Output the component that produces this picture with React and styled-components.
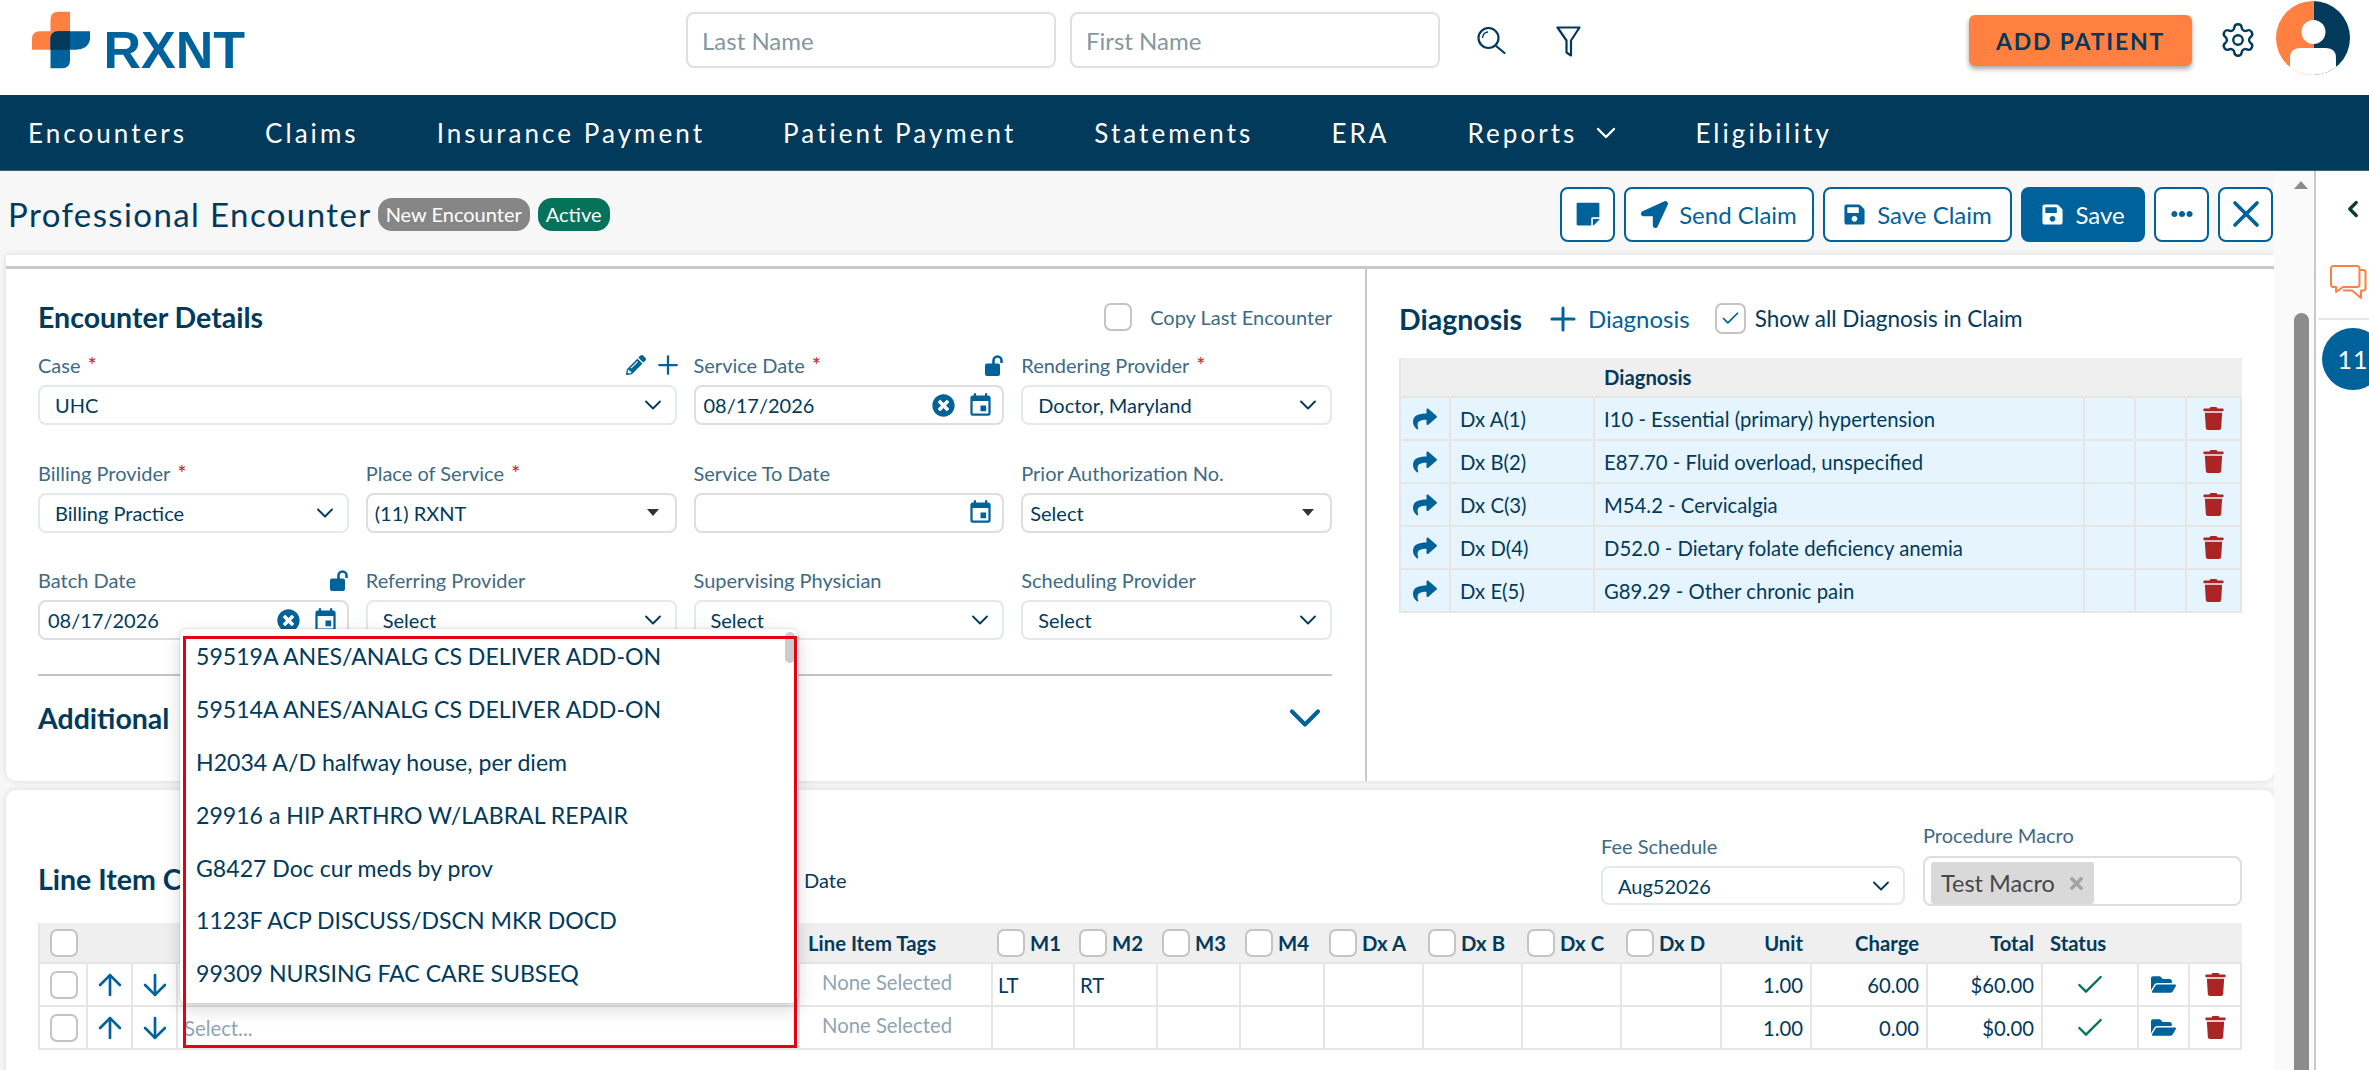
import React from 'react';
import styled, { createGlobalStyle } from 'styled-components';
import { ChevronDown, ChevronLeft, Plus, Settings, X, Check, ArrowUp, ArrowDown } from 'lucide-react';
import {
  FaEllipsisH,
  FaFolderOpen,
  FaLocationArrow,
  FaPencilAlt,
  FaSave,
  FaShare,
  FaStickyNote,
  FaTimes,
  FaTimesCircle,
  FaTrash,
} from 'react-icons/fa';
import { MdEvent } from 'react-icons/md';

const NAVY = '#023a5c';
const BLUE = '#00629b';
const LABEL = '#3e6a85';
const RED = '#ab2524';
const FONT = 'Lato, "Noto Sans", sans-serif';

const GlobalStyle = createGlobalStyle`
  * { box-sizing: border-box; }
  html, body { margin: 0; padding: 0; overflow: hidden; background: #fff; }
  body { font-family: ${FONT}; color: ${NAVY}; }
`;

const Page = styled.div`
  width: 2369px;
  height: 1070px;
  overflow: hidden;
  display: flex;
  flex-direction: column;
`;

const TopBar = styled.header`
  height: 95px;
  flex: none;
  display: flex;
  align-items: flex-start;
  padding: 0 19px 0 32px;
  background: #fff;
`;

const Logo = styled.div`
  display: flex;
  align-items: flex-start;
  margin-top: 11px;
  width: 213px;
`;

const LogoText = styled.span`
  font-family: 'Liberation Sans', sans-serif;
  font-weight: 700;
  font-size: 52px;
  line-height: 38px;
  margin: 20px 0 0 13px;
  color: ${BLUE};
`;

const SearchInput = styled.input`
  width: 370px;
  height: 56px;
  margin-top: 12px;
  margin-left: ${(p) => p.$ml || 14}px;
  padding: 0 14px;
  border: 2px solid #e0e0e0;
  border-radius: 8px;
  font-family: ${FONT};
  font-size: 24px;
  outline: none;
  &::placeholder { color: #84989f; opacity: 1; }
`;

const TopIcon = styled.div`
  margin-top: ${(p) => p.$mt}px;
  margin-left: ${(p) => p.$ml}px;
  display: flex;
`;

const AddPatient = styled.button`
  width: 223px;
  height: 51px;
  margin-top: 15px;
  margin-left: auto;
  border: none;
  border-radius: 6px;
  background: #ff8040;
  color: ${NAVY};
  font-family: ${FONT};
  font-weight: 700;
  font-size: 23px;
  letter-spacing: 1.8px;
  box-shadow: 0 3px 5px rgba(0, 0, 0, 0.35);
`;

const Avatar = styled.svg`
  margin: 1px 0 0 19px;
  flex: none;
`;

const Nav = styled.nav`
  height: 76px;
  flex: none;
  display: flex;
  align-items: center;
  gap: 78px;
  padding-left: 28px;
  background: ${NAVY};
  border-bottom: 1px solid #35607c;
`;

const NavItem = styled.div`
  display: flex;
  align-items: center;
  gap: 13px;
  color: #fff;
  font-size: 26px;
  letter-spacing: 3.05px;
`;

const NavChevron = styled(ChevronDown)`
  margin-right: -5px;
`;

const Main = styled.div`
  flex: 1;
  display: flex;
  min-height: 0;
`;

const Content = styled.main`
  width: 2274px;
  flex: none;
  background: #f7f7f7;
`;

const TitleRow = styled.div`
  height: 84px;
  display: flex;
  align-items: center;
  padding: 2px 1px 0 8px;
`;

const Title = styled.h1`
  margin: 0;
  font-size: 33px;
  font-weight: 400;
  letter-spacing: 1.4px;
  color: ${NAVY};
`;

const Badge = styled.span`
  height: 33px;
  margin-left: ${(p) => p.$ml}px;
  padding: 0 8px;
  display: flex;
  align-items: center;
  border-radius: 14px;
  background: ${(p) => p.$bg};
  color: #fff;
  font-size: 20px;
`;

const Actions = styled.div`
  margin-left: auto;
  display: flex;
  gap: 9px;
`;

const ActionButton = styled.button`
  height: 55px;
  width: ${(p) => p.$w}px;
  display: flex;
  align-items: center;
  justify-content: center;
  gap: 11px;
  padding: 0;
  border: 2px solid ${BLUE};
  border-radius: 8px;
  background: ${(p) => (p.$solid ? BLUE : '#fff')};
  color: ${(p) => (p.$solid ? '#fff' : BLUE)};
  font-family: ${FONT};
  font-size: 24px;
`;

const Panel = styled.div`
  margin-left: 6px;
  padding-top: 11px;
  background: #fff;
  border-radius: 0 0 10px 10px;
  box-shadow: 0 0 6px rgba(0, 0, 0, 0.12);
`;

const TopCard = styled.section`
  height: 515px;
  display: flex;
  border-top: 3px solid #c9c9c9;
`;

const EncounterPane = styled.div`
  width: 1361px;
  flex: none;
  padding: 34px 33px 0 32px;
  border-right: 2px solid #c9c9c9;
`;

const PaneHead = styled.div`
  height: 27px;
  display: flex;
  align-items: center;
  justify-content: space-between;
`;

const SectionTitle = styled.h2`
  margin: 0;
  font-size: 28.5px;
  line-height: 32px;
  font-weight: 700;
  color: ${NAVY};
  white-space: nowrap;
`;

const AdditionalTitle = styled(SectionTitle)`
  word-spacing: 14px;
`;

const CheckBox = styled.span`
  width: ${(p) => p.$size || 28}px;
  height: ${(p) => p.$size || 28}px;
  flex: none;
  display: inline-flex;
  align-items: center;
  justify-content: center;
  background: #fff;
  border: 2px solid #c4c4c4;
  border-radius: 7px;
  color: ${BLUE};
`;

const CheckLabel = styled.label`
  display: flex;
  align-items: center;
  gap: ${(p) => p.$gap || 18}px;
  font-size: ${(p) => p.$size || 20}px;
  color: ${(p) => p.$color || LABEL};
`;

const FormGrid = styled.div`
  margin-top: 23px;
  display: grid;
  grid-template-columns: repeat(4, 1fr);
  column-gap: 17px;
  row-gap: 35.5px;
`;

const Field = styled.div`
  grid-column: span ${(p) => p.$span || 1};
  min-width: 0;
`;

const LabelRow = styled.div`
  height: 24px;
  margin-bottom: ${(p) => p.$mb || 8}px;
  display: flex;
  align-items: center;
  gap: 13px;
  color: ${BLUE};
`;

const Label = styled.span`
  margin-right: auto;
  font-size: 20px;
  color: ${LABEL};
  white-space: nowrap;
`;

const Required = styled.em`
  font-style: normal;
  font-size: 22px;
  line-height: 20px;
  color: #c0272d;
  margin-left: 7px;
`;

const LabelPlus = styled(Plus)`
  margin: -4px -6px -4px -6px;
`;

const Control = styled.div`
  height: ${(p) => p.$h || 40}px;
  display: flex;
  align-items: center;
  gap: 12px;
  padding: 0 ${(p) => p.$pr ?? 8}px 0 ${(p) => p.$pl ?? 15}px;
  background: #fff;
  border: 2px solid ${(p) => (p.$plain ? '#dedede' : '#e3e9ef')};
  border-radius: 8px;
  font-size: 20px;
  color: ${NAVY};
  svg { flex: none; }
`;

const ControlText = styled.span`
  margin-right: auto;
  white-space: nowrap;
`;

const Caret = styled.span`
  width: 0;
  height: 0;
  border-left: 6px solid transparent;
  border-right: 6px solid transparent;
  border-top: 7px solid #333;
`;

const Rule = styled.hr`
  margin: 34px 0 0;
  border: none;
  border-top: 2px solid #c4c4c4;
`;

const AdditionalRow = styled.div`
  height: 84px;
  display: flex;
  align-items: center;
  justify-content: space-between;
  padding-right: 1px;
  color: ${BLUE};
`;

const DiagnosisPane = styled.div`
  flex: 1;
  padding: 34px 32px 0 32px;
`;

const DiagnosisHead = styled.div`
  height: 31px;
  display: flex;
  align-items: center;
`;

const AddLink = styled.span`
  display: flex;
  align-items: center;
  gap: 6px;
  margin-left: 22px;
  margin-right: 25px;
  font-size: 24px;
  color: ${BLUE};
`;

const DataTable = styled.div`
  margin-top: ${(p) => p.$mt}px;
`;

const Row = styled.div`
  display: grid;
  grid-template-columns: ${(p) => p.$cols};
  height: ${(p) => p.$h || 43}px;
  background: ${(p) => p.$bg || '#fff'};
  border-left: 2px solid #e6e6e6;
`;

const Cell = styled.div`
  position: relative;
  min-width: 0;
  display: flex;
  align-items: center;
  gap: 5px;
  justify-content: ${(p) => p.$justify || 'flex-start'};
  padding: 0 ${(p) => p.$px ?? 9}px;
  border-right: 2px solid ${(p) => (p.$head ? 'transparent' : '#e6e6e6')};
  border-bottom: 2px solid #e6e6e6;
  font-size: 20.3px;
  font-weight: ${(p) => (p.$head ? 700 : 400)};
  color: ${(p) => p.$color || NAVY};
  white-space: nowrap;
`;

const TagsCell = styled(Cell)`
  padding: 0 0 5px 22px;
  color: #8ea5b5;
`;

const LineCard = styled.section`
  margin: 9px 0 0 6px;
  height: 300px;
  padding: 0 32px;
  background: #fff;
  border-radius: 10px 10px 0 0;
  box-shadow: 0 0 6px rgba(0, 0, 0, 0.12);
`;

const LineTop = styled.div`
  height: 133px;
  padding-bottom: 16px;
  display: flex;
  align-items: flex-end;
`;

const LineTitle = styled(SectionTitle)`
  width: 766px;
  flex: none;
  margin-bottom: 12px;
`;

const DateText = styled.span`
  flex: 1;
  margin-bottom: 15px;
  font-size: 20px;
  line-height: 24px;
`;

const FeeField = styled.div`
  width: ${(p) => p.$w}px;
  flex: none;
  margin-left: ${(p) => p.$ml || 0}px;
  margin-bottom: ${(p) => p.$mb || 0}px;
`;

const MacroTag = styled.span`
  width: 163px;
  height: 42px;
  display: flex;
  align-items: center;
  justify-content: space-between;
  margin-top: 4px;
  padding: 0 8px 0 10px;
  background: #d9d9d9;
  border-radius: 3px;
  color: #474747;
  font-size: 23.5px;
  white-space: nowrap;
`;

const OptionsPopup = styled.div`
  position: absolute;
  left: 2px;
  bottom: calc(100% + 4px);
  width: 618px;
  height: 374px;
  padding: 7px 0 0 16px;
  background: #fff;
  border-radius: 6px;
  box-shadow: 0 6px 18px rgba(0, 0, 0, 0.16), 0 0 2px rgba(0, 0, 0, 0.25);
  z-index: 5;
`;

const Option = styled.div`
  height: 52.8px;
  display: flex;
  align-items: center;
  padding-bottom: 12px;
  font-size: 23.1px;
  color: ${NAVY};
  white-space: nowrap;
`;

const PopupThumb = styled.span`
  position: absolute;
  top: 3px;
  right: 3px;
  width: 10px;
  height: 31px;
  border-radius: 5px;
  background: #cccccc;
`;

const Annotation = styled.div`
  position: absolute;
  left: 5px;
  bottom: 0;
  width: 614px;
  height: 412px;
  border: 3px solid #e60012;
  z-index: 6;
  pointer-events: none;
`;

const Placeholder = styled.span`
  color: #8ea5b5;
`;

const ScrollTrack = styled.div`
  width: 42px;
  flex: none;
  display: flex;
  flex-direction: column;
  padding-left: 20px;
  background: #fafafa;
  border-right: 2px solid #c9c9c9;
`;

const ScrollArrow = styled.span`
  width: 0;
  height: 0;
  margin-top: 10px;
  border-left: 7.5px solid transparent;
  border-right: 7.5px solid transparent;
  border-bottom: 8px solid #8c8c8c;
`;

const ScrollThumb = styled.span`
  flex: 1;
  width: 15px;
  margin-top: 124px;
  border-radius: 8px 8px 0 0;
  background: #8c8c8c;
`;

const SideBar = styled.aside`
  flex: 1;
  min-width: 0;
  overflow: hidden;
  background: #fff;
`;

const SideIcon = styled.div`
  height: ${(p) => p.$h}px;
  display: flex;
  align-items: center;
  padding-left: ${(p) => p.$pl}px;
  border-bottom: ${(p) => (p.$line ? '2px solid #e6e6e6' : 'none')};
  margin-left: 2px;
`;

const CountBubble = styled.div`
  width: 62px;
  height: 62px;
  margin: 8px 0 0 6px;
  display: flex;
  align-items: center;
  justify-content: center;
  border-radius: 50%;
  background: ${BLUE};
  color: #fff;
  font-size: 25px;
  letter-spacing: 1px;
`;

const Calendar = () => <MdEvent size={27} color={BLUE} />;
const ClearIcon = () => <FaTimesCircle size={23} color={BLUE} />;
const Chevron = () => <ChevronDown size={28} color={NAVY} strokeWidth={1.6} />;

const UnlockIcon = () => (
  <svg width="19" height="21" viewBox="0 0 19 21" fill="none">
    <rect x="0" y="8.5" width="15" height="12.5" rx="2" fill={BLUE} />
    <path d="M8.5 9V5.5a4 4 0 0 1 8 0V8" stroke={BLUE} strokeWidth="2.6" />
  </svg>
);

const LogoMark = () => (
  <svg width="60" height="59" viewBox="0 0 60 59">
    <path d="M27 0H39V39H0V28Q0 20 8 20H19V8Q19 0 27 0Z" fill="#ff8040" />
    <path d="M27 20H60V24Q60 39 45 39H39V50Q39 58 31 58H19V28Q19 20 27 20Z" fill={BLUE} />
    <path d="M27 20H39V39H19V28Q19 20 27 20Z" fill={NAVY} />
  </svg>
);

const SearchIcon = () => (
  <svg width="29" height="27" viewBox="0 0 29 27" fill="none" stroke={NAVY} strokeWidth="2.2">
    <circle cx="11.5" cy="11" r="10" />
    <path d="M18.5 18.5L27.5 26" strokeLinecap="round" />
    <path d="M5.5 11C5.5 7.5 8 5 11 5" strokeWidth="1.4" />
  </svg>
);

const FunnelIcon = () => (
  <svg width="25" height="31" viewBox="0 0 25 31" fill="none" stroke={NAVY} strokeWidth="2.2" strokeLinejoin="round">
    <path d="M1.5 1.5H23.5L15 14.5V29.5L10.5 26.5V14.5Z" />
  </svg>
);

const AvatarImage = () => (
  <Avatar width="74" height="74" viewBox="0 0 74 74">
    <defs>
      <clipPath id="avatar-clip">
        <circle cx="37" cy="37" r="37" />
      </clipPath>
    </defs>
    <g clipPath="url(#avatar-clip)">
      <rect width="38" height="74" fill="#ff8040" />
      <rect x="38" width="36" height="74" fill={NAVY} />
      <ellipse cx="37.5" cy="31" rx="12" ry="12" fill="#fff" />
      <path d="M14 74V57Q14 47 24 47H50Q60 47 60 57V74Z" fill="#fff" />
    </g>
  </Avatar>
);

const ChatIcon = () => (
  <svg width="37" height="35" viewBox="0 0 37 35" fill="none" stroke="#ff8040" strokeWidth="2" strokeLinejoin="round">
    <path d="M3.5 1H27a2.5 2.5 0 0 1 2.5 2.5V19.5a2.5 2.5 0 0 1-2.5 2.5H13L6 27V22H3.5A2.5 2.5 0 0 1 1 19.5V3.5A2.5 2.5 0 0 1 3.5 1Z" />
    <path d="M29.5 5H33a2.5 2.5 0 0 1 2.5 2.5V23a2.5 2.5 0 0 1-2.5 2.5H31V33L22 25.5H13" />
  </svg>
);

const navItems = ['Encounters', 'Claims', 'Insurance Payment', 'Patient Payment', 'Statements', 'ERA'];

const diagnosis = [
  ['Dx A(1)', 'I10 - Essential (primary) hypertension'],
  ['Dx B(2)', 'E87.70 - Fluid overload, unspecified'],
  ['Dx C(3)', 'M54.2 - Cervicalgia'],
  ['Dx D(4)', 'D52.0 - Dietary folate deficiency anemia'],
  ['Dx E(5)', 'G89.29 - Other chronic pain'],
];

const options = [
  '59519A ANES/ANALG CS DELIVER ADD-ON',
  '59514A ANES/ANALG CS DELIVER ADD-ON',
  'H2034 A/D halfway house, per diem',
  '29916 a HIP ARTHRO W/LABRAL REPAIR',
  'G8427 Doc cur meds by prov',
  '1123F ACP DISCUSS/DSCN MKR DOCD',
  '99309 NURSING FAC CARE SUBSEQ',
];

const DX_COLS = '50px 144px 490px 51px 51px 1fr';
const LINE_COLS = '48px 45px 45px 622px 193px 82px 83px 83px 84px 99px 99px 99px 100px 90px 116px 115px 96px 51px 1fr';

const lineRows = [
  { m1: 'LT', m2: 'RT', charge: '60.00', total: '$60.00' },
  { m1: '', m2: '', charge: '0.00', total: '$0.00', select: true },
];

const modifiers = ['M1', 'M2', 'M3', 'M4', 'Dx A', 'Dx B', 'Dx C', 'Dx D'];

const App = () => {
  return (
    <Page>
      <GlobalStyle />
      <TopBar>
        <Logo>
          <LogoMark />
          <LogoText>RXNT</LogoText>
        </Logo>
        <SearchInput $ml={441} placeholder="Last Name" />
        <SearchInput placeholder="First Name" />
        <TopIcon $ml={37} $mt={27}>
          <SearchIcon />
        </TopIcon>
        <TopIcon $ml={50} $mt={26}>
          <FunnelIcon />
        </TopIcon>
        <AddPatient>ADD PATIENT</AddPatient>
        <TopIcon $ml={27} $mt={21}>
          <Settings size={38} color={NAVY} strokeWidth={1.5} />
        </TopIcon>
        <AvatarImage />
      </TopBar>

      <Nav>
        {navItems.map((item) => (
          <NavItem key={item}>{item}</NavItem>
        ))}
        <NavItem>
          Reports
          <NavChevron size={32} color="#fff" strokeWidth={1.8} />
        </NavItem>
        <NavItem>Eligibility</NavItem>
      </Nav>

      <Main>
        <Content>
          <TitleRow>
            <Title>Professional Encounter</Title>
            <Badge $ml={6} $bg="#868686">New Encounter</Badge>
            <Badge $ml={8} $bg="#05725a">Active</Badge>
            <Actions>
              <ActionButton $w={55}>
                <FaStickyNote size={26} />
              </ActionButton>
              <ActionButton $w={190}>
                <FaLocationArrow size={27} />
                Send Claim
              </ActionButton>
              <ActionButton $w={189}>
                <FaSave size={23} />
                Save Claim
              </ActionButton>
              <ActionButton $w={124} $solid>
                <FaSave size={23} />
                Save
              </ActionButton>
              <ActionButton $w={55}>
                <FaEllipsisH size={22} />
              </ActionButton>
              <ActionButton $w={55}>
                <X size={44} strokeWidth={2} />
              </ActionButton>
            </Actions>
          </TitleRow>

          <Panel>
            <TopCard>
              <EncounterPane>
                <PaneHead>
                  <SectionTitle>Encounter Details</SectionTitle>
                  <CheckLabel>
                    <CheckBox />
                    Copy Last Encounter
                  </CheckLabel>
                </PaneHead>
                <FormGrid>
                  <Field $span={2}>
                    <LabelRow>
                      <Label>
                        Case<Required>*</Required>
                      </Label>
                      <FaPencilAlt size={20} />
                      <LabelPlus size={30} strokeWidth={1.8} />
                    </LabelRow>
                    <Control>
                      <ControlText>UHC</ControlText>
                      <Chevron />
                    </Control>
                  </Field>
                  <Field>
                    <LabelRow>
                      <Label>
                        Service Date<Required>*</Required>
                      </Label>
                      <UnlockIcon />
                    </LabelRow>
                    <Control $plain $pl={8}>
                      <ControlText>08/17/2026</ControlText>
                      <ClearIcon />
                      <Calendar />
                    </Control>
                  </Field>
                  <Field>
                    <LabelRow>
                      <Label>
                        Rendering Provider<Required>*</Required>
                      </Label>
                    </LabelRow>
                    <Control>
                      <ControlText>Doctor, Maryland</ControlText>
                      <Chevron />
                    </Control>
                  </Field>

                  <Field>
                    <LabelRow>
                      <Label>
                        Billing Provider<Required>*</Required>
                      </Label>
                    </LabelRow>
                    <Control>
                      <ControlText>Billing Practice</ControlText>
                      <Chevron />
                    </Control>
                  </Field>
                  <Field>
                    <LabelRow>
                      <Label>
                        Place of Service<Required>*</Required>
                      </Label>
                    </LabelRow>
                    <Control $plain $pl={7} $pr={16}>
                      <ControlText>(11) RXNT</ControlText>
                      <Caret />
                    </Control>
                  </Field>
                  <Field>
                    <LabelRow>
                      <Label>Service To Date</Label>
                    </LabelRow>
                    <Control $plain $pl={8}>
                      <ControlText />
                      <Calendar />
                    </Control>
                  </Field>
                  <Field>
                    <LabelRow>
                      <Label>Prior Authorization No.</Label>
                    </LabelRow>
                    <Control $plain $pl={7} $pr={16}>
                      <ControlText>Select</ControlText>
                      <Caret />
                    </Control>
                  </Field>

                  <Field>
                    <LabelRow>
                      <Label>Batch Date</Label>
                      <UnlockIcon />
                    </LabelRow>
                    <Control $plain $pl={8}>
                      <ControlText>08/17/2026</ControlText>
                      <ClearIcon />
                      <Calendar />
                    </Control>
                  </Field>
                  <Field>
                    <LabelRow>
                      <Label>Referring Provider</Label>
                    </LabelRow>
                    <Control>
                      <ControlText>Select</ControlText>
                      <Chevron />
                    </Control>
                  </Field>
                  <Field>
                    <LabelRow>
                      <Label>Supervising Physician</Label>
                    </LabelRow>
                    <Control>
                      <ControlText>Select</ControlText>
                      <Chevron />
                    </Control>
                  </Field>
                  <Field>
                    <LabelRow>
                      <Label>Scheduling Provider</Label>
                    </LabelRow>
                    <Control>
                      <ControlText>Select</ControlText>
                      <Chevron />
                    </Control>
                  </Field>
                </FormGrid>
                <Rule />
                <AdditionalRow>
                  <AdditionalTitle>Additional Information</AdditionalTitle>
                  <ChevronDown size={52} strokeWidth={1.9} />
                </AdditionalRow>
              </EncounterPane>

              <DiagnosisPane>
                <DiagnosisHead>
                  <SectionTitle>Diagnosis</SectionTitle>
                  <AddLink>
                    <Plus size={38} strokeWidth={1.9} />
                    Diagnosis
                  </AddLink>
                  <CheckLabel $gap={9} $color={NAVY} $size={22.5}>
                    <CheckBox $size={31}>
                      <Check size={21} strokeWidth={2} />
                    </CheckBox>
                    Show all Diagnosis in Claim
                  </CheckLabel>
                </DiagnosisHead>
                <DataTable $mt={24}>
                  <Row $cols={DX_COLS} $h={40} $bg="#efefef">
                    <Cell $head />
                    <Cell $head />
                    <Cell $head>Diagnosis</Cell>
                    <Cell $head />
                    <Cell $head />
                    <Cell $head />
                  </Row>
                  {diagnosis.map(([code, text]) => (
                    <Row key={code} $cols={DX_COLS} $bg="#e6f4fd">
                      <Cell $justify="center" $px={0} $color={BLUE}>
                        <FaShare size={24} />
                      </Cell>
                      <Cell>{code}</Cell>
                      <Cell>{text}</Cell>
                      <Cell />
                      <Cell />
                      <Cell $justify="center" $px={0} $color={RED}>
                        <FaTrash size={23} />
                      </Cell>
                    </Row>
                  ))}
                </DataTable>
              </DiagnosisPane>
            </TopCard>
          </Panel>

          <LineCard>
            <LineTop>
              <LineTitle>Line Item Charges</LineTitle>
              <DateText>Date</DateText>
              <FeeField $w={304} $mb={2}>
                <LabelRow>
                  <Label>Fee Schedule</Label>
                </LabelRow>
                <Control $h={39}>
                  <ControlText>Aug52026</ControlText>
                  <Chevron />
                </Control>
              </FeeField>
              <FeeField $w={319} $ml={18} $mb={1}>
                <LabelRow $mb={9}>
                  <Label>Procedure Macro</Label>
                </LabelRow>
                <Control $h={50} $plain $pl={6}>
                  <MacroTag>
                    Test Macro
                    <FaTimes size={19} color="#a3a3a3" />
                  </MacroTag>
                </Control>
              </FeeField>
            </LineTop>

            <DataTable $mt={0}>
              <Row $cols={LINE_COLS} $h={41} $bg="#efefef">
                <Cell $head $px={10}>
                  <CheckBox />
                </Cell>
                <Cell $head />
                <Cell $head />
                <Cell $head />
                <Cell $head $px={8}>Line Item Tags</Cell>
                {modifiers.map((m) => (
                  <Cell key={m} $head $px={4}>
                    <CheckBox />
                    {m}
                  </Cell>
                ))}
                <Cell $head $justify="flex-end" $px={7}>Unit</Cell>
                <Cell $head $justify="flex-end" $px={7}>Charge</Cell>
                <Cell $head $justify="flex-end" $px={7}>Total</Cell>
                <Cell $head $px={7}>Status</Cell>
                <Cell $head />
                <Cell $head />
              </Row>
              {lineRows.map((row) => (
                <Row key={row.total} $cols={LINE_COLS}>
                  <Cell $px={10}>
                    <CheckBox />
                  </Cell>
                  <Cell $justify="center" $px={0} $color={BLUE}>
                    <ArrowUp size={34} strokeWidth={1.9} />
                  </Cell>
                  <Cell $justify="center" $px={0} $color={BLUE}>
                    <ArrowDown size={34} strokeWidth={1.9} />
                  </Cell>
                  <Cell $px={6}>
                    {row.select && (
                      <>
                        <Placeholder>Select...</Placeholder>
                        <OptionsPopup>
                          <PopupThumb />
                          {options.map((option) => (
                            <Option key={option}>{option}</Option>
                          ))}
                        </OptionsPopup>
                        <Annotation />
                      </>
                    )}
                  </Cell>
                  <TagsCell>None Selected</TagsCell>
                  <Cell $px={5}>{row.m1}</Cell>
                  <Cell $px={5}>{row.m2}</Cell>
                  <Cell />
                  <Cell />
                  <Cell />
                  <Cell />
                  <Cell />
                  <Cell />
                  <Cell $justify="flex-end" $px={7}>1.00</Cell>
                  <Cell $justify="flex-end" $px={7}>{row.charge}</Cell>
                  <Cell $justify="flex-end" $px={7}>{row.total}</Cell>
                  <Cell $justify="center" $color="#05725a">
                    <Check size={32} strokeWidth={1.8} />
                  </Cell>
                  <Cell $justify="center" $px={0} $color={BLUE}>
                    <FaFolderOpen size={25} />
                  </Cell>
                  <Cell $justify="center" $px={0} $color={RED}>
                    <FaTrash size={23} />
                  </Cell>
                </Row>
              ))}
            </DataTable>
          </LineCard>
        </Content>

        <ScrollTrack>
          <ScrollArrow />
          <ScrollThumb />
        </ScrollTrack>

        <SideBar>
          <SideIcon $h={76} $pl={22}>
            <ChevronLeft size={26} color="#0b3d2e" strokeWidth={3} />
          </SideIcon>
          <SideIcon $h={73} $pl={12} $line>
            <ChatIcon />
          </SideIcon>
          <CountBubble>11</CountBubble>
        </SideBar>
      </Main>
    </Page>
  );
};

export default App;
